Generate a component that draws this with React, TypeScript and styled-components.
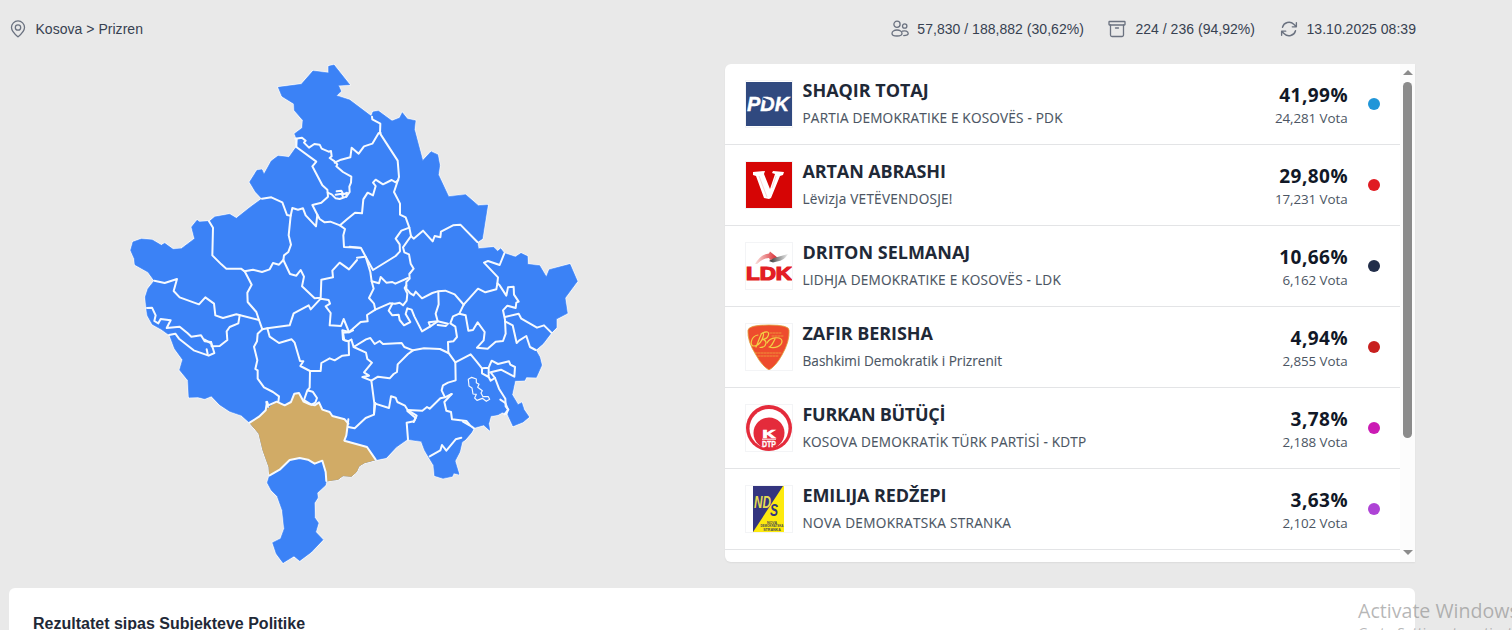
import React from "react";
import styled, { createGlobalStyle } from "styled-components";

const GlobalStyle = createGlobalStyle`
  * { box-sizing: border-box; }
  html, body { margin: 0; padding: 0; }
  body { background: #e9e9e9; overflow: hidden; font-family: "Liberation Sans", Arial, sans-serif; }
`;

const Page = styled.div`
  position: relative;
  width: 1512px;
  height: 630px;
  overflow: hidden;
  background: #e9e9e9;
  padding: 0 96px 0 9px;
`;

const TopBar = styled.header`
  display: flex;
  align-items: center;
  justify-content: space-between;
  height: 64px;
  padding-bottom: 6px;
`;

const Stats = styled.div`
  display: flex;
  align-items: center;
  gap: 24.5px;
`;

const Stat = styled.div<{ $gap?: number }>`
  display: flex;
  align-items: center;
  gap: ${(p) => p.$gap ?? 8}px;
  color: #374151;
  font-size: 14px;
  letter-spacing: 0.03px;
  line-height: 20px;
  white-space: nowrap;

  svg {
    flex: none;
    width: 18px;
    height: 18px;
    fill: none;
    stroke: #6b7280;
    stroke-width: 1.7;
    stroke-linecap: round;
    stroke-linejoin: round;
  }
`;

const Columns = styled.main`
  display: grid;
  grid-template-columns: 690px 690px;
  gap: 26px;
  height: 498px;
`;

const MapArea = styled.section`
  display: flex;
  margin: -9px 0 0 111px;
`;

const Municipalities = styled.svg`
  flex: none;
  width: 470px;
  height: 515px;
  overflow: visible;
`;

const Panel = styled.section`
  display: flex;
  overflow: hidden;
  height: 498px;
  background: #fff;
  border-radius: 6px 0 0 6px;
  box-shadow: 0 1px 2px rgba(0, 0, 0, 0.06);
`;

const List = styled.div`
  flex: 1;
  overflow: hidden;
  font-family: "Open Sans", "Noto Sans", sans-serif;
`;

const Row = styled.article`
  display: flex;
  align-items: center;
  height: 81px;
  padding: 0 20px 1px;
  border-bottom: 1px solid #e3e4e6;
`;

const LogoBox = styled.div`
  flex: none;
  width: 48px;
  height: 48px;
  border: 1px solid #f3f4f6;

  svg { display: block; width: 46px; height: 46px; }
`;

const Person = styled.div`
  flex: 1;
  margin-left: 9.5px;
  white-space: nowrap;
`;

const Name = styled.h3<{ $spacing: number }>`
  margin: 0;
  color: #1f2937;
  font-size: 18px;
  font-weight: 700;
  line-height: 27px;
  letter-spacing: ${(p) => p.$spacing}px;
`;

const Party = styled.p<{ $spacing: number }>`
  margin: 1px 0 0;
  color: #4b5563;
  font-size: 13.6px;
  font-weight: 500;
  line-height: 26px;
  letter-spacing: ${(p) => p.$spacing}px;
  -webkit-text-stroke: 0.12px #4b5563;
`;

const Score = styled.div`
  display: flex;
  flex-direction: column;
  align-items: flex-end;
  padding-top: 2px;
  white-space: nowrap;
`;

const Percent = styled.strong`
  margin-right: -0.5px;
  color: #111827;
  font-size: 19px;
  font-weight: 700;
  line-height: 26px;
  letter-spacing: 0.45px;
`;

const Votes = styled.span`
  color: #4b5563;
  font-size: 13.4px;
  line-height: 20px;
  letter-spacing: -0.08px;
`;

const Dot = styled.i<{ $color: string }>`
  width: 12px;
  height: 12px;
  margin-left: 20.5px;
  border-radius: 50%;
  background: ${(p) => p.$color};
`;

const Scrollbar = styled.div`
  display: flex;
  flex-direction: column;
  align-items: center;
  width: 15px;
  padding: 6px 0 7px;
  background: #fcfcfc;
`;

const Arrow = styled.span<{ $down?: boolean }>`
  border: 5px solid transparent;
  border-top: ${(p) => (p.$down ? "5px solid #8b8b8b" : "0")};
  border-bottom: ${(p) => (p.$down ? "0" : "5px solid #8b8b8b")};
`;

const Thumb = styled.span`
  width: 9px;
  height: 356px;
  margin: 7px 0 auto;
  border-radius: 5px;
  background: #8b8b8b;
`;

const ResultsCard = styled.section`
  width: 1406px;
  height: 80px;
  margin-top: 26px;
  padding: 26px 24px;
  border-radius: 6px;
  background: #fff;
`;

const CardTitle = styled.h2`
  margin: 0;
  color: #1f2937;
  font-size: 16px;
  font-weight: 700;
  line-height: 20px;
`;

const Watermark = styled.aside`
  position: absolute;
  left: 1358px;
  top: 597px;
  color: rgba(135, 135, 135, 0.6);
  font-family: "Open Sans", sans-serif;
  font-size: 19.6px;
  line-height: 27px;
  white-space: nowrap;
`;

const WatermarkNote = styled.div`
  font-size: 14px;
  line-height: 18px;
`;

const OUTLINE =
  "476,96 545,87 580,47 627,53 627,33 643,29 690,88 656,90 664,108 650,121 690,134 722,158 755,183 760,170 776,167 817,197 840,188 848,172 863,191 887,196 884,222 909,316 934,289 954,298 960,330 956,358 987,424 1038,418 1076,451 1104,449 1088,550 1073,560 1076,580 1122,576 1134,588 1143,580 1154,594 1187,605 1204,594 1223,603 1224,627 1260,631 1280,665 1289,643 1351,627 1373,678 1336,728 1343,774 1310,791 1310,817 1295,832 1270,865 1248,884 1260,905 1266,930 1250,966 1220,965 1215,975 1186,976 1177,1018 1195,1048 1206,1042 1213,1063 1228,1085 1210,1100 1180,1112 1164,1077 1148,1071 1135,1078 1113,1082 1107,1105 1110,1125 1092,1109 1063,1117 1055,1132 1037,1153 1027,1160 1020,1190 1006,1217 1018,1257 1002,1253 998,1263 970,1269 945,1261 942,1230 930,1210 915,1185 905,1158 863,1152 830,1175 800,1207 770,1213 735,1222 718,1232 710,1250 695,1263 670,1261 655,1272 620,1277 617,1290 592,1313 594,1327 584,1343 585,1387 596,1403 588,1430 610,1453 575,1490 540,1516 523,1502 490,1522 470,1495 459,1462 483,1450 494,1420 488,1365 473,1323 455,1305 443,1282 450,1260 448,1235 430,1185 418,1135 390,1102 365,1080 330,1068 300,1048 275,1022 255,1030 235,1025 208,1026 205,975 180,944 189,913 165,880 150,840 125,822 98,807 83,780 80,755 77,725 85,700 104,676 85,650 46,628 44,610 33,585 40,560 65,551 98,554 125,570 135,564 160,582 185,580 225,550 216,515 232,495 240,500 270,498 285,485 330,477 350,489 390,457 427,430 408,410 390,380 412,345 427,343 433,357 455,317 475,302 508,306 530,275 531,250 525,235 548,218 550,195 524,165 523,145 487,123";

const PRIZREN =
  "60,157 88,139 108,120 141,94 165,105 184,95 194,70 208,68 222,94 240,102 255,105 268,96 278,118 300,125 308,137 345,147 355,160 354,180 344,211 412,230 438,268 405,277 388,287 380,305 365,318 340,316 325,327 290,332 288,305 278,271 255,280 235,268 210,263 180,269 150,298 120,315 118,290 100,240 88,190";

/* Boundary lines, grouped by the sector of the country they run through. */
const BORDERS: { dx: number; dy: number; lines: string[] }[] = [
  {
    dx: 0,
    dy: 0,
    lines: [
      "527,250 547,247 558,256 553,262 568,277 584,266 600,268 606,280 627,289 634,287 636,303 630,308 645,318 653,327 650,333 670,350 695,364 694,382 689,394 690,410 680,424 660,431 648,429 636,417 624,412 623,403 608,390 578,333 590,319 530,275",
      "530,275 531,250",
      "645,322 664,313 692,306 696,277 717,295 733,273 758,265 777,233 783,233",
      "651,408 665,406 671,417 682,412 680,424 M648,418 666,415 670,425",
      "624,412 625,424 605,442 578,449 593,478 600,491 615,501 632,499 661,510 676,521 671,540 673,575 722,577",
      "427,430 455,426 488,441 502,479 513,481 518,458 535,463 550,459 558,480 589,513 593,478",
      "513,481 507,540 514,568 506,590 493,600 491,615",
      "268,498 280,517 278,600 305,627 320,640 364,640 375,648",
      "661,510 682,492 706,472 727,474 731,432 744,412 760,420 768,392 760,382 768,373 790,387 816,374 828,381 836,374",
    ],
  },
  {
    dx: 660,
    dy: 0,
    lines: [
      "97,184 98,192 122,205 121,234 174,316 178,365 163,410 181,445 181,478 198,486 209,517 214,542 222,550 250,526 279,558 285,542 302,546 304,529 340,510 362,508 413,560",
      "209,517 185,526 168,550 180,567 181,588 168,602 100,644 78,604 64,578 30,574",
      "214,542 190,576 194,591 208,597 213,625 222,640 209,656 210,670 200,680 200,700 212,714 222,720 228,709 247,729 278,713 294,708 317,706 345,717 365,740 372,748",
    ],
  },
  {
    dx: 0,
    dy: 510,
    lines: [
      "104,166 135,173 172,161 162,197 180,216 238,237 257,216 283,235 287,270 310,278 350,267 418,284 428,312 443,309 510,300 522,264 567,240 573,252 603,220 627,224 631,235 618,243 633,263 630,300 664,302 672,281 683,308 688,321 700,315",
      "375,138 400,133 427,140 450,132 460,113 478,118 491,104 511,146 530,151 543,134 553,154 547,183 585,219 603,217 605,163 640,156 638,136 660,112 688,132 712,104",
      "375,138 396,178 383,202 384,230 410,260 418,284",
      "82,248 97,247 108,270 104,287 116,294 123,281 153,285 141,308 180,304 204,324 215,334 244,330 255,348 274,350 276,363 300,362 323,344 321,318 330,305 356,294 360,270",
      "148,329 167,325 178,340 222,375 267,391 284,383 274,350 M255,343 270,352 M261,372 264,386",
      "443,309 450,334 478,353 516,342 525,352 541,407 551,408 542,422 571,437 603,437 605,413 630,399 645,405 668,391 688,389 687,348 674,345 670,322 688,321",
      "571,437 570,487 563,495 553,524 M563,495 579,499 592,518 587,532 575,538 553,524",
      "428,312 414,325 412,348 403,364 413,405 407,431 414,435 414,460 433,486 460,500 478,513 476,530 M440,530 445,545",
    ],
  },
  {
    dx: 660,
    dy: 510,
    lines: [
      "78,94 86,120 92,140 96,168 118,174 123,155 140,172 158,170 167,175 205,158",
      "96,168 102,190 88,218 103,235 107,253 82,269 84,288 63,290 38,312 28,320 8,315 10,343 25,348 35,343",
      "52,97 76,94",
      "107,253 150,234 166,235 180,232 190,240 201,226 203,205 195,188 200,180",
      "158,235 147,256 158,270 177,268 180,284 193,300 212,290 198,266 203,249 216,253 224,273 247,318 272,303 267,291 294,288 288,265 297,237 296,201",
      "272,303 294,288 325,295 318,302 294,299",
      "372,238 359,265 340,273 332,294 347,304 352,335 341,348 325,350 326,382 347,411",
      "372,238 415,190 437,201 470,192 473,174 475,156 433,112 445,107 480,119 494,84",
      "359,265 378,270 386,316 400,314 414,291 435,320 432,345 412,367 444,370 468,349 490,347 498,325 496,283 490,255 503,241 528,248 530,232 537,229 523,208 522,184 505,186 500,211 480,180 473,174",
      "496,275 537,265 545,280 592,307 613,300 635,322",
      "496,288 519,300 531,353 538,346 560,332 571,365 588,374",
      "35,343 42,365 79,342 92,338 105,356 120,347 130,356 186,353 194,365 220,375 253,369 301,371 326,383",
      "42,365 79,382 83,401 97,412 73,441 88,451 68,455 95,466 115,454 150,459 162,446 172,440 174,417 205,386 220,375",
      "95,466 104,534 103,567 M104,534 148,548 154,513 168,517 173,530 196,541 204,554 231,571 222,590",
      "204,554 248,556 262,545 270,550 302,519 316,516 336,506 M316,516 306,495 310,480 325,472 348,465 347,411 393,387 411,409 427,429 447,427 456,406 475,416 508,408 512,418 526,425 524,454 484,433 453,441 M427,429 427,444 447,455 447,427 M447,455 453,466 466,458 453,441",
      "466,458 478,490 497,520 498,543 506,553 494,567",
      "336,506 314,530 320,556 334,560 337,582 380,587 390,599",
    ],
  },
  {
    dx: 330,
    dy: 945,
    lines: [
      "437,98 433,133 408,143 375,174 356,170",
      "356,147 350,195 344,211 412,230 438,268",
      "533,122 558,143 553,153 531,157 535,207",
      "600,258 632,240 637,224 650,241 678,207 695,202",
      "700,154 725,168 733,174",
      "812,88 827,98 835,118 830,132",
    ],
  },
];

const toPath = (s: string) => s.split(/\s*M/).map((p) => `M${p.trim()}`).join("");

function KosovoMap() {
  return (
    <Municipalities viewBox="1 -1 1410 1545">
      <polygon points={OUTLINE} fill="#3b82f6" stroke="#fafcff" strokeWidth="6" strokeLinejoin="round" />
      <polygon points={OUTLINE} fill="#3b82f6" stroke="#3b82f6" strokeWidth="2" strokeLinejoin="round" />
      <polygon points={PRIZREN} transform="translate(330 945)" fill="#d1ab66" stroke="#d1ab66" strokeWidth="3" strokeLinejoin="round" />
      <g fill="none" stroke="#f6faff" strokeWidth="6" strokeLinejoin="round" strokeLinecap="round">
        {BORDERS.map((b, i) => (
          <g key={i} transform={`translate(${b.dx} ${b.dy})`}>
            {b.lines.map((l, j) => (
              <path key={j} d={toPath(l)} />
            ))}
          </g>
        ))}
        <path
          d="M60,157 88,139 108,120 112,94 116,105 141,94 165,105 184,95 194,70 208,68 222,94 240,102 255,105 268,96 278,118 300,125 308,137 345,147 356,160 M120,315 150,298 180,269 210,263 235,268 255,280 278,271 288,305 290,332"
          transform="translate(330 945)"
        />
        <path
          d="M386,462 396,456 410,461 410,472 418,477 414,486 428,496 424,503 430,514 446,514 450,522 440,528 428,519 412,525 405,518 410,507 400,506 397,488 388,482Z"
          transform="translate(660 510)"
          strokeWidth="3.5"
        />
      </g>
    </Municipalities>
  );
}

const PdkLogo = () => (
  <svg viewBox="0 0 46 46">
    <rect y="1" width="46" height="44" fill="#30497f" />
    <text x="1" y="29.500" textLength="42" lengthAdjust="spacingAndGlyphs" fill="#fff" stroke="#fff" strokeWidth=".4" fontFamily="Liberation Sans" fontWeight="700" fontStyle="italic" fontSize="20">PDK</text>
    <path d="M17 17.500l7 3" stroke="#30497f" strokeWidth="2" />
  </svg>
);

const VvLogo = () => (
  <svg viewBox="0 0 46 46">
    <rect width="46" height="46" fill="#d60505" />
    <path d="M7 10l12-1-1 3 6 15 5-15-3-1 1-2 11 1-1 3-3 1-9 22-2 1-5-1-8-22-3-1z" fill="#fff" />
    <path d="M13 14l8 21M30 14l-4 12" stroke="#f3b9b9" strokeWidth=".6" />
  </svg>
);

const LdkLogo = () => (
  <svg viewBox="0 0 46 46">
    <defs>
      <linearGradient id="ldkRed"><stop offset="0" stopColor="#fbe3df" /><stop offset="1" stopColor="#d8222a" /></linearGradient>
      <linearGradient id="ldkGrey"><stop offset="0" stopColor="#333" /><stop offset="1" stopColor="#eee" /></linearGradient>
    </defs>
    <path d="M9 21Q15 11 23 10.500l1-2 8 6.500-8 2-1-2q-6 0-12 6z" fill="url(#ldkRed)" />
    <path d="M23 18l5-3 14-4q-4 7-11 7.500l-4 1z" fill="url(#ldkGrey)" />
    <text x="0" y="36.500" textLength="46" lengthAdjust="spacingAndGlyphs" fill="#e31e25" stroke="#e31e25" strokeWidth="1.200" fontFamily="Liberation Sans" fontWeight="700" fontSize="17.500">LDK</text>
  </svg>
);

const BdLogo = () => (
  <svg viewBox="0 0 46 46">
    <path d="M2 6Q3 1 23 1t20 5q1 11-7 25-6 11-13 15-7-4-13-15Q1 17 2 6z" fill="#ee4c2d" stroke="#dfa33c" strokeWidth=".8" />
    <g fill="none" stroke="#f3cf45" strokeLinecap="round">
      <path d="M12 11C5 12 3 22 8 22 15 22 19 10 17 9 15 8 12 19 10 23M15 10c6-4 9-2 7 2-1 3-6 3.500-6 3.500 6 0 5 8-2 8" strokeWidth="1.200" />
      <path d="M29 15C26 21 25 23 23 23M21 19c3-6 14-7 15-2 0 5-7 8-13 6" strokeWidth="1.200" />
      <path d="M24 9h12M26 12h11M9 29h26M12 32h20" strokeWidth=".8" strokeDasharray="2 1" opacity=".7" />
    </g>
  </svg>
);

const KdtpLogo = () => (
  <svg viewBox="0 0 46 46">
    <circle cx="23" cy="23" r="23" fill="#e42b3b" />
    <circle cx="23" cy="23.500" r="19.500" fill="#fff" />
    <circle cx="23" cy="28" r="15.500" fill="#e42b3b" />
    <text x="16.500" y="33" textLength="13" lengthAdjust="spacingAndGlyphs" fill="#fff" stroke="#fff" strokeWidth=".7" fontFamily="Liberation Sans" fontWeight="700" fontSize="10">K</text>
    <path d="M16 34.200h14" stroke="#fff" strokeWidth="1" />
    <text x="16" y="42" textLength="14" lengthAdjust="spacingAndGlyphs" fill="#fff" stroke="#fff" strokeWidth=".3" fontFamily="Liberation Sans" fontWeight="700" fontSize="9">DTP</text>
  </svg>
);

const NdsLogo = () => (
  <svg viewBox="0 0 46 46">
    <rect x="7" width="31" height="46" fill="#fdea0e" />
    <path d="M7 0h30L7 46z" fill="#34357f" />
    <g fontFamily="Liberation Sans" fontWeight="700" fontStyle="italic">
      <text x="8" y="22" textLength="17" lengthAdjust="spacingAndGlyphs" fontSize="16" fill="#e8dc50">ND</text>
      <text x="24" y="30" textLength="8" lengthAdjust="spacingAndGlyphs" fontSize="16" fill="#34357f">S</text>
    </g>
    <g fontFamily="Liberation Sans" fontWeight="700" fontSize="3.600" fill="#4b4a52" textAnchor="middle">
      <text x="26" y="37.500">NOVA</text>
      <text x="26" y="41.300" textLength="23" lengthAdjust="spacingAndGlyphs">DEMOKRATSKA</text>
      <text x="26" y="45.100">STRANKA</text>
    </g>
  </svg>
);

const CANDIDATES = [
  { name: "SHAQIR TOTAJ", ns: -0.03, party: "PARTIA DEMOKRATIKE E KOSOVËS - PDK", ps: 0.19, pct: "41,99%", votes: "24,281", color: "#2196d8", Logo: PdkLogo },
  { name: "ARTAN ABRASHI", ns: -0.12, party: "Lëvizja VETËVENDOSJE!", ps: 0.24, pct: "29,80%", votes: "17,231", color: "#e01b22", Logo: VvLogo },
  { name: "DRITON SELMANAJ", ns: 0, party: "LIDHJA DEMOKRATIKE E KOSOVËS - LDK", ps: 0.23, pct: "10,66%", votes: "6,162", color: "#222e4a", Logo: LdkLogo },
  { name: "ZAFIR BERISHA", ns: -0.08, party: "Bashkimi Demokratik i Prizrenit", ps: 0.02, pct: "4,94%", votes: "2,855", color: "#c8201f", Logo: BdLogo },
  { name: "FURKAN BÜTÜÇİ", ns: -0.27, party: "KOSOVA DEMOKRATİK TÜRK PARTİSİ - KDTP", ps: 0.2, pct: "3,78%", votes: "2,188", color: "#cb1bb4", Logo: KdtpLogo },
  { name: "EMILIJA REDŽEPI", ns: -0.1, party: "NOVA DEMOKRATSKA STRANKA", ps: 0.32, pct: "3,63%", votes: "2,102", color: "#ae43d6", Logo: NdsLogo },
];

export default function App() {
  return (
    <Page>
      <GlobalStyle />
      <TopBar>
        <Stat $gap={8.5}>
          <svg viewBox="0 0 24 24">
            <circle cx="12" cy="10" r="3.600" />
            <path d="M12 22.500c4-3.400 8.700-7.300 8.700-12.500a8.700 8.700 0 0 0-17.400 0c0 5.200 4.700 9.100 8.700 12.500z" />
          </svg>
          Kosova &gt; Prizren
        </Stat>
        <Stats>
          <Stat $gap={8.5}>
            <svg viewBox="0 0 18 18">
              <g strokeWidth="1.300">
                <circle cx="6" cy="4.300" r="3.100" />
                <circle cx="13.700" cy="6" r="2.200" />
                <path d="M1 13.500c0-2 2.200-3.500 5-3.500s5 1.500 5 3.500c0 1.600-1.500 2.500-5 2.500s-5-.9-5-2.500zM11.500 11.200c2.700-1 5.700.2 5.700 2.400 0 1.500-1.600 2-4.500 2" />
              </g>
            </svg>
            57,830 / 188,882 (30,62%)
          </Stat>
          <Stat $gap={9}>
            <svg viewBox="0 0 18 18">
              <g strokeWidth="1.300">
                <rect x="1" y="1.500" width="16" height="3.500" rx=".5" />
                <path d="M2.500 5v10a1.500 1.500 0 0 0 1.500 1.500h10a1.500 1.500 0 0 0 1.500-1.500V5M7.500 8h3" />
              </g>
            </svg>
            224 / 236 (94,92%)
          </Stat>
          <Stat $gap={9}>
            <svg viewBox="1 1 22 22">
              <path d="M16.023 9.348h4.992v-.001M2.985 19.644v-4.992m0 0h4.992m-4.993 0 3.181 3.183a8.250 8.250 0 0 0 13.803-3.700M4.031 9.865a8.250 8.250 0 0 1 13.803-3.700l3.181 3.182m0-4.991v4.990" />
            </svg>
            13.10.2025 08:39
          </Stat>
        </Stats>
      </TopBar>
      <Columns>
        <MapArea>
          <KosovoMap />
        </MapArea>
        <Panel>
          <List>
            {CANDIDATES.map(({ Logo, ...c }) => (
              <Row key={c.name}>
                <LogoBox>
                  <Logo />
                </LogoBox>
                <Person>
                  <Name $spacing={c.ns}>{c.name}</Name>
                  <Party $spacing={c.ps}>{c.party}</Party>
                </Person>
                <Score>
                  <Percent>{c.pct}</Percent>
                  <Votes>{c.votes} Vota</Votes>
                </Score>
                <Dot $color={c.color} />
              </Row>
            ))}
          </List>
          <Scrollbar>
            <Arrow />
            <Thumb />
            <Arrow $down />
          </Scrollbar>
        </Panel>
      </Columns>
      <ResultsCard>
        <CardTitle>Rezultatet sipas Subjekteve Politike</CardTitle>
      </ResultsCard>
      <Watermark>
        Activate Windows
        <WatermarkNote>Go to Settings to activate Windows.</WatermarkNote>
      </Watermark>
    </Page>
  );
}
